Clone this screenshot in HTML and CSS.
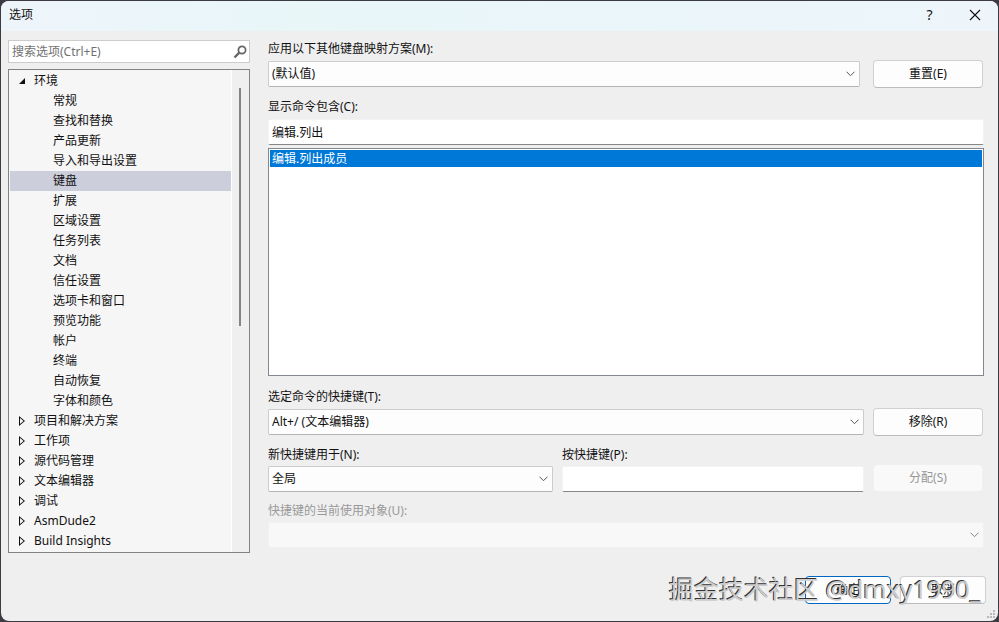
FILE: index.html
```html
<!DOCTYPE html>
<html lang="zh-CN">
<head>
  <meta charset="utf-8">
  <title>选项</title>
  <link rel="stylesheet" href="styles.css">
</head>
<body>
  <div class="dialog">
    <header class="titlebar">
      <h1 class="title">选项</h1>
      <button class="title-button" aria-label="帮助">?</button>
      <button class="title-button" aria-label="关闭">
        <svg width="12" height="12" viewBox="0 0 12 12"><path d="M1 1l10 10M11 1L1 11" stroke="#111" stroke-width="1.1" fill="none"/></svg>
      </button>
    </header>

    <main class="content">
      <aside class="sidebar">
        <div class="search">
          <input class="search-input" type="text" placeholder="搜索选项(Ctrl+E)" aria-label="搜索选项">
          <svg class="search-icon" width="14" height="14" viewBox="0 0 14 14"><circle cx="9" cy="5" r="3.6" fill="none" stroke="#666" stroke-width="1.8"/><path d="M6.3 7.7L1.5 12.5" stroke="#666" stroke-width="2.4"/></svg>
        </div>
        <nav class="tree">
          <ul class="tree-list">
            <li class="node open">环境</li>
            <li class="leaf">常规</li>
            <li class="leaf">查找和替换</li>
            <li class="leaf">产品更新</li>
            <li class="leaf">导入和导出设置</li>
            <li class="leaf selected">键盘</li>
            <li class="leaf">扩展</li>
            <li class="leaf">区域设置</li>
            <li class="leaf">任务列表</li>
            <li class="leaf">文档</li>
            <li class="leaf">信任设置</li>
            <li class="leaf">选项卡和窗口</li>
            <li class="leaf">预览功能</li>
            <li class="leaf">帐户</li>
            <li class="leaf">终端</li>
            <li class="leaf">自动恢复</li>
            <li class="leaf">字体和颜色</li>
            <li class="node">项目和解决方案</li>
            <li class="node">工作项</li>
            <li class="node">源代码管理</li>
            <li class="node">文本编辑器</li>
            <li class="node">调试</li>
            <li class="node">AsmDude2</li>
            <li class="node">Build Insights</li>
          </ul>
          <div class="scrollbar"><div class="scroll-thumb"></div></div>
        </nav>
      </aside>

      <form class="panel">
        <label for="scheme">应用以下其他键盘映射方案(M):</label>
        <div class="row scheme-row">
          <select class="field" id="scheme"><option>(默认值)</option></select>
          <button class="button" type="button">重置(E)</button>
        </div>

        <label for="filter">显示命令包含(C):</label>
        <input class="field filter" id="filter" type="text" value="编辑.列出">
        <ul class="commands">
          <li class="command">编辑.列出成员</li>
        </ul>

        <label for="shortcuts">选定命令的快捷键(T):</label>
        <div class="row">
          <select class="field" id="shortcuts"><option>Alt+/ (文本编辑器)</option></select>
          <button class="button" type="button">移除(R)</button>
        </div>

        <div class="row group-row">
          <div class="group scope">
            <label for="scope">新快捷键用于(N):</label>
            <select class="field" id="scope"><option>全局</option></select>
          </div>
          <div class="group keys">
            <label for="keys">按快捷键(P):</label>
            <input class="field" id="keys" type="text">
          </div>
          <button class="button" type="button" disabled>分配(S)</button>
        </div>

        <label class="muted" for="used">快捷键的当前使用对象(U):</label>
        <select class="field" id="used" disabled><option></option></select>
      </form>
    </main>

    <footer class="footer">
      <button class="button primary">确定</button>
      <button class="button">取消</button>
    </footer>

    <div class="watermark">掘金技术社区 @dmxy1990_</div>
    <svg class="grip" width="9" height="9" viewBox="0 0 9 9" fill="#b8b8b8"><path d="M6 0h2v2h-2zM3 3h2v2h-2zM6 3h2v2h-2zM0 6h2v2h-2zM3 6h2v2h-2zM6 6h2v2h-2z"/></svg>
  </div>
</body>
</html>
```

FILE: styles.css
```css
* {
  box-sizing: border-box;
}

body {
  margin: 0;
  padding: 1px;
  min-height: 100vh;
  display: flex;
  background: #3b3b41;
  color: #111;
  font: 12px/20px "Noto Sans", "Noto Sans CJK SC", sans-serif;
}

button,
input,
select {
  font: inherit;
  color: inherit;
}

ul {
  list-style: none;
  margin: 0;
  padding: 0;
}

.dialog {
  position: relative;
  flex: 1;
  display: flex;
  flex-direction: column;
  background: #efefef;
  border-radius: 8px;
  overflow: hidden;
}

.titlebar {
  display: flex;
  height: 30px;
  padding: 0 1px 0 8px;
  background: linear-gradient(90deg, #eef5fa, #e8f6f8 30%, #edf5fa);
}

.title {
  flex: 1;
  margin: 0;
  font-size: 12px;
  font-weight: normal;
  line-height: 28px;
}

.title-button {
  display: flex;
  align-items: center;
  justify-content: center;
  width: 45px;
  height: 28px;
  padding: 0;
  border: 0;
  background: none;
  font-size: 14px;
}

.content {
  flex: 1;
  display: flex;
  gap: 18px;
  padding: 7px 14px 0 7px;
}

.sidebar {
  width: 242px;
  padding-top: 2px;
}

.search {
  display: flex;
  align-items: center;
  height: 23px;
  margin-bottom: 6px;
  padding: 0 2px 0 3px;
  background: #fff;
  border: 1px solid #ccc;
}

.search-input {
  flex: 1;
  min-width: 0;
  padding: 0;
  border: 0;
  outline: 0;
  background: none;
}

.search-input::placeholder {
  color: #717171;
}

.tree {
  display: flex;
  height: 484px;
  border: 1px solid #828282;
  background: #f6f6f6;
}

.tree-list {
  flex: 1;
  padding: 1px 0 1px 1px;
  border-right: 1px solid #fff;
}

.node,
.leaf {
  height: 20px;
}

.node {
  display: flex;
  align-items: center;
  padding-left: 9px;
}

.leaf {
  padding-left: 43px;
}

.selected {
  background: #cccedb;
}

.node::before {
  content: "";
  width: 6px;
  height: 10px;
  margin-right: 9px;
  background: #111;
  clip-path: path(evenodd, "M0 0L6 5L0 10ZM1 2V8L4.6 5Z");
}

.node.open::before {
  height: 6px;
  clip-path: polygon(100% 0, 100% 100%, 0 100%);
}

.scrollbar {
  width: 17px;
  padding: 18px 7px 0;
  background: #efefef;
}

.scroll-thumb {
  width: 2px;
  height: 238px;
  background: #858585;
}

.panel {
  flex: 1;
  display: flex;
  flex-direction: column;
}

.panel label {
  line-height: 22px;
}

.row {
  display: flex;
  align-items: center;
  gap: 9px;
  margin: 0 1px 8px 0;
}

.row .field {
  flex: 1;
}

.scheme-row {
  gap: 13px;
}

.group-row {
  align-items: flex-end;
}

.group {
  display: flex;
  flex-direction: column;
}

.group .field {
  flex: none;
}

.scope {
  flex: 285;
}

.keys {
  flex: 302;
}

.field {
  width: 100%;
  min-width: 0;
  height: 26px;
  padding: 0 3px;
  border: 1px solid #ccc;
  border-bottom-color: #b4b4b4;
  border-radius: 2px;
  background: #fdfdfd;
}

select.field {
  appearance: none;
  background: #fdfdfd url("data:image/svg+xml,%3Csvg xmlns='http://www.w3.org/2000/svg' width='9' height='6'%3E%3Cpath d='M.5 .7l4 4 4-4' fill='none' stroke='%23555'/%3E%3C/svg%3E") no-repeat right 4px center;
}

input.field {
  border-color: #f3f3f3;
  border-bottom-color: #868686;
  background: #fff;
}

.filter {
  margin-top: 1px;
}

.field:disabled {
  border-color: #f2f2f2;
  opacity: 0.7;
}

.commands {
  height: 228px;
  margin: 3px 0 10px;
  padding: 1px;
  border: 1px solid #828790;
  background: #fff;
}

.command {
  height: 17px;
  padding-left: 2px;
  background: #0078d7;
  color: #fff;
  line-height: 17px;
}

.button {
  width: 110px;
  height: 28px;
  padding: 0;
  border: 1px solid #d0d0d0;
  border-bottom-color: #bbb;
  border-radius: 4px;
  background: #fdfdfd;
}

.button:disabled {
  border-color: #f0f0f0;
  background: #f9f9f9;
  color: #969696;
}

.panel .muted {
  color: #999;
}

.footer {
  display: flex;
  justify-content: flex-end;
  gap: 9px;
  padding: 0 12px 17px;
}

.footer .button {
  width: 86px;
}

.footer .primary {
  border-color: #0067c0;
}

.watermark {
  position: absolute;
  right: 17px;
  bottom: 14px;
  color: #ccc;
  font-size: 25px;
  line-height: 36px;
  text-shadow: -1px -1px 0 #333;
  pointer-events: none;
}

.grip {
  position: absolute;
  right: 2px;
  bottom: 2px;
}
```
